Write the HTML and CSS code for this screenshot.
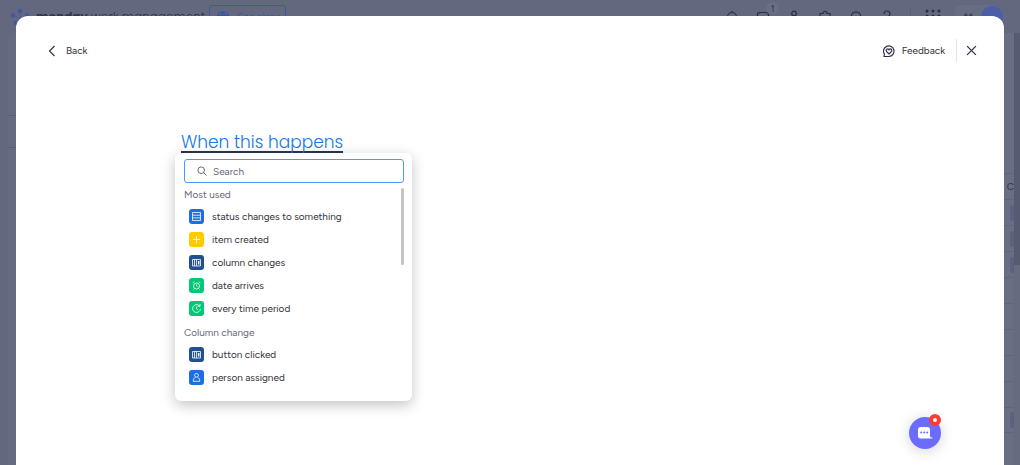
FILE: index.html
```html
<!DOCTYPE html>
<html lang="en">
<head>
	<meta charset="utf-8">
	<meta name="viewport" content="width=device-width, initial-scale=1">
	<title>Automation builder</title>

	<link rel="stylesheet" href="styles.css">
</head>
<body>

	<!-- dimmed page behind the dialog -->
	<div class="page">
		<header class="topbar">
			<svg class="logo" viewBox="0 0 20 20" fill="#3d57a8">
				<circle cx="10" cy="4" r="2.300"/>
				<circle cx="3" cy="8.500" r="2.300"/>
				<circle cx="17" cy="8.500" r="2.300"/>
				<circle cx="6" cy="16" r="2.300"/>
				<circle cx="14" cy="16" r="2.300"/>
				<path d="M10 4v7M3 8.500l7 2.500 7-2.500M6 16l4-5 4 5" stroke="#4a5d9c" stroke-width="0.800" fill="none"/>
			</svg>
			<p class="brand"><b>monday</b> work management</p>
			<button class="plans" type="button">
				<svg viewBox="0 0 12 12" fill="none" stroke="currentColor" stroke-width="1.200"><path d="M3 1h6l2.500 3.500L6 11 .5 4.500zM.5 4.500h11M4 4.500L6 1l2 3.500L6 11z"/></svg>
				See plans
			</button>
			<nav class="tools">
				<svg viewBox="0 0 18 18"><path d="M4.500 12V9a4.500 4.500 0 0 1 9 0v3l1.500 2H3zM9 4.500V3M7.500 16h3"/></svg>
				<span class="inbox">
					<svg viewBox="0 0 18 18"><path d="M3.500 10V7c0-2 1-2.500 2.500-2.500h6c1.500 0 2.500.5 2.500 2.500v7.500h-11zM3.500 10H6l1 2h4l1-2h2.500"/></svg>
					<span class="count">1</span>
				</span>
				<svg viewBox="0 0 18 18"><circle cx="9" cy="5.500" r="2.300"/><path d="M4 15c0-6 10-6 10 0z"/></svg>
				<svg viewBox="0 0 18 18"><path d="M7 5.500c0-3 4-3 4 0h3v3c2 0 2 4 0 4v3H4v-10z"/></svg>
				<svg viewBox="0 0 18 18"><circle cx="9" cy="8.500" r="4.700"/><path d="M12 12l4 4"/></svg>
				<svg viewBox="0 0 18 18"><path d="M6 6c0-4 6-4 6 0 0 2.500-3 2-3 5M9 13v1.500"/></svg>
			</nav>
			<svg class="apps" viewBox="0 0 16 16" fill="#2b2d45">
				<circle cx="2" cy="2" r="1.500"/><circle cx="8" cy="2" r="1.500"/><circle cx="14" cy="2" r="1.500"/>
				<circle cx="2" cy="7" r="1.500"/><circle cx="8" cy="7" r="1.500"/><circle cx="14" cy="7" r="1.500"/>
				<circle cx="2" cy="12" r="1.500"/><circle cx="8" cy="12" r="1.500"/><circle cx="14" cy="12" r="1.500"/>
			</svg>
			<div class="account">
				<svg class="product" viewBox="0 0 14 10"><path d="M2 8l3-5M7 8l3-5" stroke="#3d405a" stroke-width="3" stroke-linecap="round"/><circle cx="12" cy="7" r="1.500" fill="#8a7480"/></svg>
				<span class="avatar"></span>
			</div>
		</header>
		<div class="content">
			<aside class="side">
				<div class="side-top"></div>
				<div class="side-item"></div>
			</aside>
			<div class="board">
				<div class="board-row head">C</div>
				<div class="board-row"><i class="pill"></i></div>
				<div class="board-row"><i class="pill"></i></div>
				<div class="board-row"><i class="pill"></i></div>
				<div class="board-row"></div>
				<div class="board-row"></div>
				<div class="board-row"></div>
				<div class="board-row"></div>
				<div class="board-row"></div>
				<div class="board-row"><i class="pill"></i></div>
			</div>
			<div class="page-scroll"><div class="page-thumb"></div></div>
		</div>
	</div>

	<div class="overlay">
		<main class="modal">
			<div class="modal-head">
				<button class="link-btn" type="button">
					<svg class="back-icon" viewBox="0 0 8 12"><path d="M6.500 1L1.500 6l5 5"/></svg>
					Back
				</button>
				<div class="head-right">
					<button class="link-btn feedback" type="button">
						<svg class="feedback-icon" viewBox="0 0 14 14"><path d="M2 12.500l.4-2.300A5.300 5.300 0 1 1 7 12.500z"/><path d="M7 10L4.500 7.400C3.300 5.700 5.700 4 7 5.800 8.300 4 10.700 5.700 9.500 7.400z"/></svg>
						Feedback
					</button>
					<button class="close" type="button" aria-label="Close">
						<svg viewBox="0 0 10 10"><path d="M1 1l8 8M9 1L1 9"/></svg>
					</button>
				</div>
			</div>

			<div class="builder">
				<div class="trigger">
					<button class="trigger-title" type="button">When this happens</button>
					<div class="menu">
						<label class="search">
							<svg viewBox="0 0 10 10"><circle cx="4.200" cy="4.200" r="3.300"/><path d="M6.600 6.600L9.500 9.500"/></svg>
							<input type="text" placeholder="Search" aria-label="Search">
						</label>
						<div class="list">
							<h2>Most used</h2>
							<button class="option" type="button">
								<svg class="blue" viewBox="0 0 15 15"><path d="M3.500 3.500h8v8h-8zM3.500 6.200h8M3.500 8.900h8"/></svg>
								status changes to something
							</button>
							<button class="option" type="button">
								<svg class="yellow" viewBox="0 0 15 15"><path d="M7.500 4v7M4 7.500h7"/></svg>
								item created
							</button>
							<button class="option" type="button">
								<svg class="navy" viewBox="0 0 15 15"><path d="M3.500 4.500h8v6.500h-8zM5.500 4.500v6.500M7.500 4.500v6.500"/><path d="M9.700 6v3.500" stroke-width="1.500"/></svg>
								column changes
							</button>
							<button class="option" type="button">
								<svg class="green" viewBox="0 0 15 15"><circle cx="7.500" cy="8" r="3"/><path d="M7.500 6.500V8l1 .6M3.700 5l1.500-1.500M11.300 5L9.800 3.500M5.500 10.500l-1 1M9.500 10.500l1 1"/></svg>
								date arrives
							</button>
							<button class="option" type="button">
								<svg class="green" viewBox="0 0 15 15"><path d="M10.200 4.700A3.900 3.900 0 1 0 11.400 7.800M11 3v2.300H8.700M7.500 5.700v2l1.400 1"/></svg>
								every time period
							</button>
							<h2>Column change</h2>
							<button class="option" type="button">
								<svg class="navy" viewBox="0 0 15 15"><path d="M3.500 4.500h8v6.500h-8zM5.500 4.500v6.500M7.500 4.500v6.500"/><path d="M9.700 6v3.500" stroke-width="1.500"/></svg>
								button clicked
							</button>
							<button class="option" type="button">
								<svg class="blue" viewBox="0 0 15 15"><circle cx="7.500" cy="5.300" r="1.900"/><path d="M6.500 7.200C5 8 4.200 9 4.200 11.300h6.600C10.800 9 10 8 8.500 7.200"/></svg>
								person assigned
							</button>
						</div>
						<span class="menu-thumb"></span>
					</div>
				</div>
			</div>

			<button class="chat" type="button" aria-label="Chat">
				<svg viewBox="0 0 16 14"><path d="M3.500 1h7A2.500 2.500 0 0 1 13 3.500V10c0 1 1 1.500 2.300 1.500v1H3.500A2.500 2.500 0 0 1 1 10V3.500A2.500 2.500 0 0 1 3.500 1z" fill="#fff"/><circle cx="4.200" cy="6.500" r="1" fill="#6b6bff"/><circle cx="7.200" cy="6.500" r="1" fill="#6b6bff"/><circle cx="10.200" cy="6.500" r="1" fill="#6b6bff"/></svg>
				<span class="chat-badge"></span>
			</button>
		</main>
	</div>

</body>
</html>
```
FILE: styles.css
```css
*{
	margin: 0;
	padding: 0;
	box-sizing: border-box;
}
body{
	height: 100vh;
	overflow: hidden;
	background: #64687f;
	color: #323338;
	font-family: Figtree, Lato, "Liberation Sans", sans-serif;
	font-size: 10px;
}
button{
	background: none;
	border: none;
	color: inherit;
	font: inherit;
	cursor: pointer;
}
svg{
	display: block;
	flex: none;
}

/* page behind */
.page{
	display: flex;
	flex-direction: column;
	height: 100vh;
}
.topbar{
	display: flex;
	align-items: center;
	height: 33px;
	padding: 0 17px 0 10px;
	color: #303248;
}
.logo{
	width: 20px;
	height: 20px;
	margin-right: 6px;
}
.brand{
	font-family: Poppins, Inter, sans-serif;
	font-size: 12px;
	font-weight: 300;
}
.brand b{
	font-weight: 600;
}
.plans{
	display: flex;
	align-items: center;
	gap: 8px;
	height: 23px;
	margin-left: 4px;
	padding: 0 5px 0 7px;
	border: 1px solid #3c57a8;
	border-radius: 3px;
	color: #3453ac;
}
.plans svg{
	width: 12px;
	height: 12px;
}
.tools{
	display: flex;
	gap: 13px;
	margin-left: auto;
	padding-right: 14px;
	border-right: 1px solid #5d6178;
}
.tools svg{
	width: 18px;
	height: 18px;
	fill: none;
	stroke: #2b2d45;
	stroke-width: 1.2;
}
.inbox{
	position: relative;
}
.count{
	position: absolute;
	top: -6px;
	right: -7px;
	width: 13px;
	border-radius: 7px;
	background: #6b6f85;
	font-size: 9px;
	line-height: 13px;
	text-align: center;
}
.apps{
	width: 16px;
	height: 16px;
	margin-left: 14px;
}
.account{
	display: flex;
	align-items: center;
	gap: 6px;
	height: 24px;
	margin-left: 14px;
	padding-left: 6px;
	border-radius: 4px 12px 12px 4px;
	background: #696d83;
}
.product{
	width: 14px;
	height: 10px;
}
.avatar{
	width: 22px;
	height: 22px;
	border-radius: 50%;
	background: #4a5fa5;
}
.content{
	display: flex;
	flex: 1;
	margin-left: 8px;
	border-top-left-radius: 8px;
	background: #6a6e84;
}
.side{
	width: 180px;
	background: #676b81;
	border-top-left-radius: 8px;
}
.side-top{
	height: 83px;
	border-bottom: 1px solid #595d75;
}
.side-item{
	height: 32px;
	border-bottom: 1px solid #595d75;
}
.board{
	flex: 1;
	padding-top: 140px;
	overflow: hidden;
}
.board-row{
	display: flex;
	align-items: center;
	justify-content: flex-end;
	height: 26px;
	border-top: 1px solid #61657c;
}
.board-row:last-child{
	border-bottom: 1px solid #61657c;
}
.pill{
	width: 4px;
	height: 16px;
	border-radius: 3px 0 0 3px;
	background: #5d6180;
}
.page-scroll{
	width: 6px;
	background: #676b80;
}
.page-thumb{
	height: 232px;
	background: #575b72;
}

/* dialog */
.overlay{
	position: fixed;
	inset: 0;
	padding: 16px 16px 0;
}
.modal{
	position: relative;
	height: 100%;
	border-radius: 12px 12px 0 0;
	background: #fff;
}
.modal-head{
	display: flex;
	justify-content: space-between;
	align-items: center;
	padding: 23px 26px 0 32px;
}
.link-btn{
	display: flex;
	align-items: center;
	gap: 10px;
	height: 23px;
}
.link-btn svg,
.close svg{
	fill: none;
	stroke: #323348;
	stroke-width: 1.2;
}
.back-icon{
	width: 8px;
	height: 12px;
}
.feedback{
	gap: 6px;
	padding-right: 11px;
}
.feedback-icon{
	width: 14px;
	height: 14px;
}
.head-right{
	display: flex;
}
.close{
	padding: 0 1px 0 9px;
	border-left: 1px solid #e3e4ea;
}
.close svg{
	width: 11px;
	height: 11px;
}

.builder{
	padding: 68px 165px 0;
}
.trigger{
	position: relative;
	width: fit-content;
}
.trigger-title{
	display: block;
	height: 23px;
	border-bottom: 2px solid #323348;
	color: #1478e8;
	font-family: Poppins, Inter, sans-serif;
	font-size: 17px;
	font-weight: 300;
	line-height: 24px;
}
.menu{
	position: absolute;
	top: 100%;
	left: -6px;
	width: 237px;
	padding: 6px 8px 12px 9px;
	border-radius: 6px;
	background: #fff;
	box-shadow: 0 4px 14px rgba(0, 0, 0, 0.24);
}
.search{
	display: flex;
	align-items: center;
	gap: 6px;
	height: 24px;
	padding: 0 12px;
	border: 1px solid #4a9bf3;
	border-radius: 3px;
}
.search svg{
	width: 10px;
	height: 10px;
	fill: none;
	stroke: #676879;
	stroke-width: 1;
}
.search input{
	flex: 1;
	min-width: 0;
	border: none;
	outline: none;
	background: none;
	color: #323338;
	font: inherit;
}
.search input::placeholder{
	color: #676879;
}
.list h2{
	padding-top: 2px;
	color: #676879;
	font-size: 10px;
	font-weight: 400;
	line-height: 20px;
}
.option + h2{
	padding-top: 3px;
}
.option{
	display: flex;
	align-items: center;
	gap: 8px;
	width: 100%;
	height: 23px;
	padding-left: 5px;
}
.option svg{
	width: 15px;
	height: 15px;
	border-radius: 3px;
	fill: none;
	stroke: #fff;
	stroke-width: 0.8;
}
.blue{
	background: #1b6fe4;
}
.yellow{
	background: #ffcb00;
}
.navy{
	background: #225091;
}
.green{
	background: #00c875;
}
.menu-thumb{
	position: absolute;
	top: 35px;
	right: 8px;
	width: 3px;
	height: 77px;
	border-radius: 2px;
	background: #c3c4cd;
}

.chat{
	position: absolute;
	right: 63px;
	bottom: 16px;
	display: grid;
	place-items: center;
	width: 32px;
	height: 32px;
	border-radius: 50%;
	background: #6b6bff;
	box-shadow: 0 2px 14px rgba(0, 0, 0, 0.18);
}
.chat svg{
	width: 16px;
	height: 14px;
}
.chat-badge{
	position: absolute;
	top: -3px;
	right: 0;
	width: 12px;
	height: 12px;
	border: 4px solid #ff3b30;
	border-radius: 50%;
	background: #fff;
}
```
